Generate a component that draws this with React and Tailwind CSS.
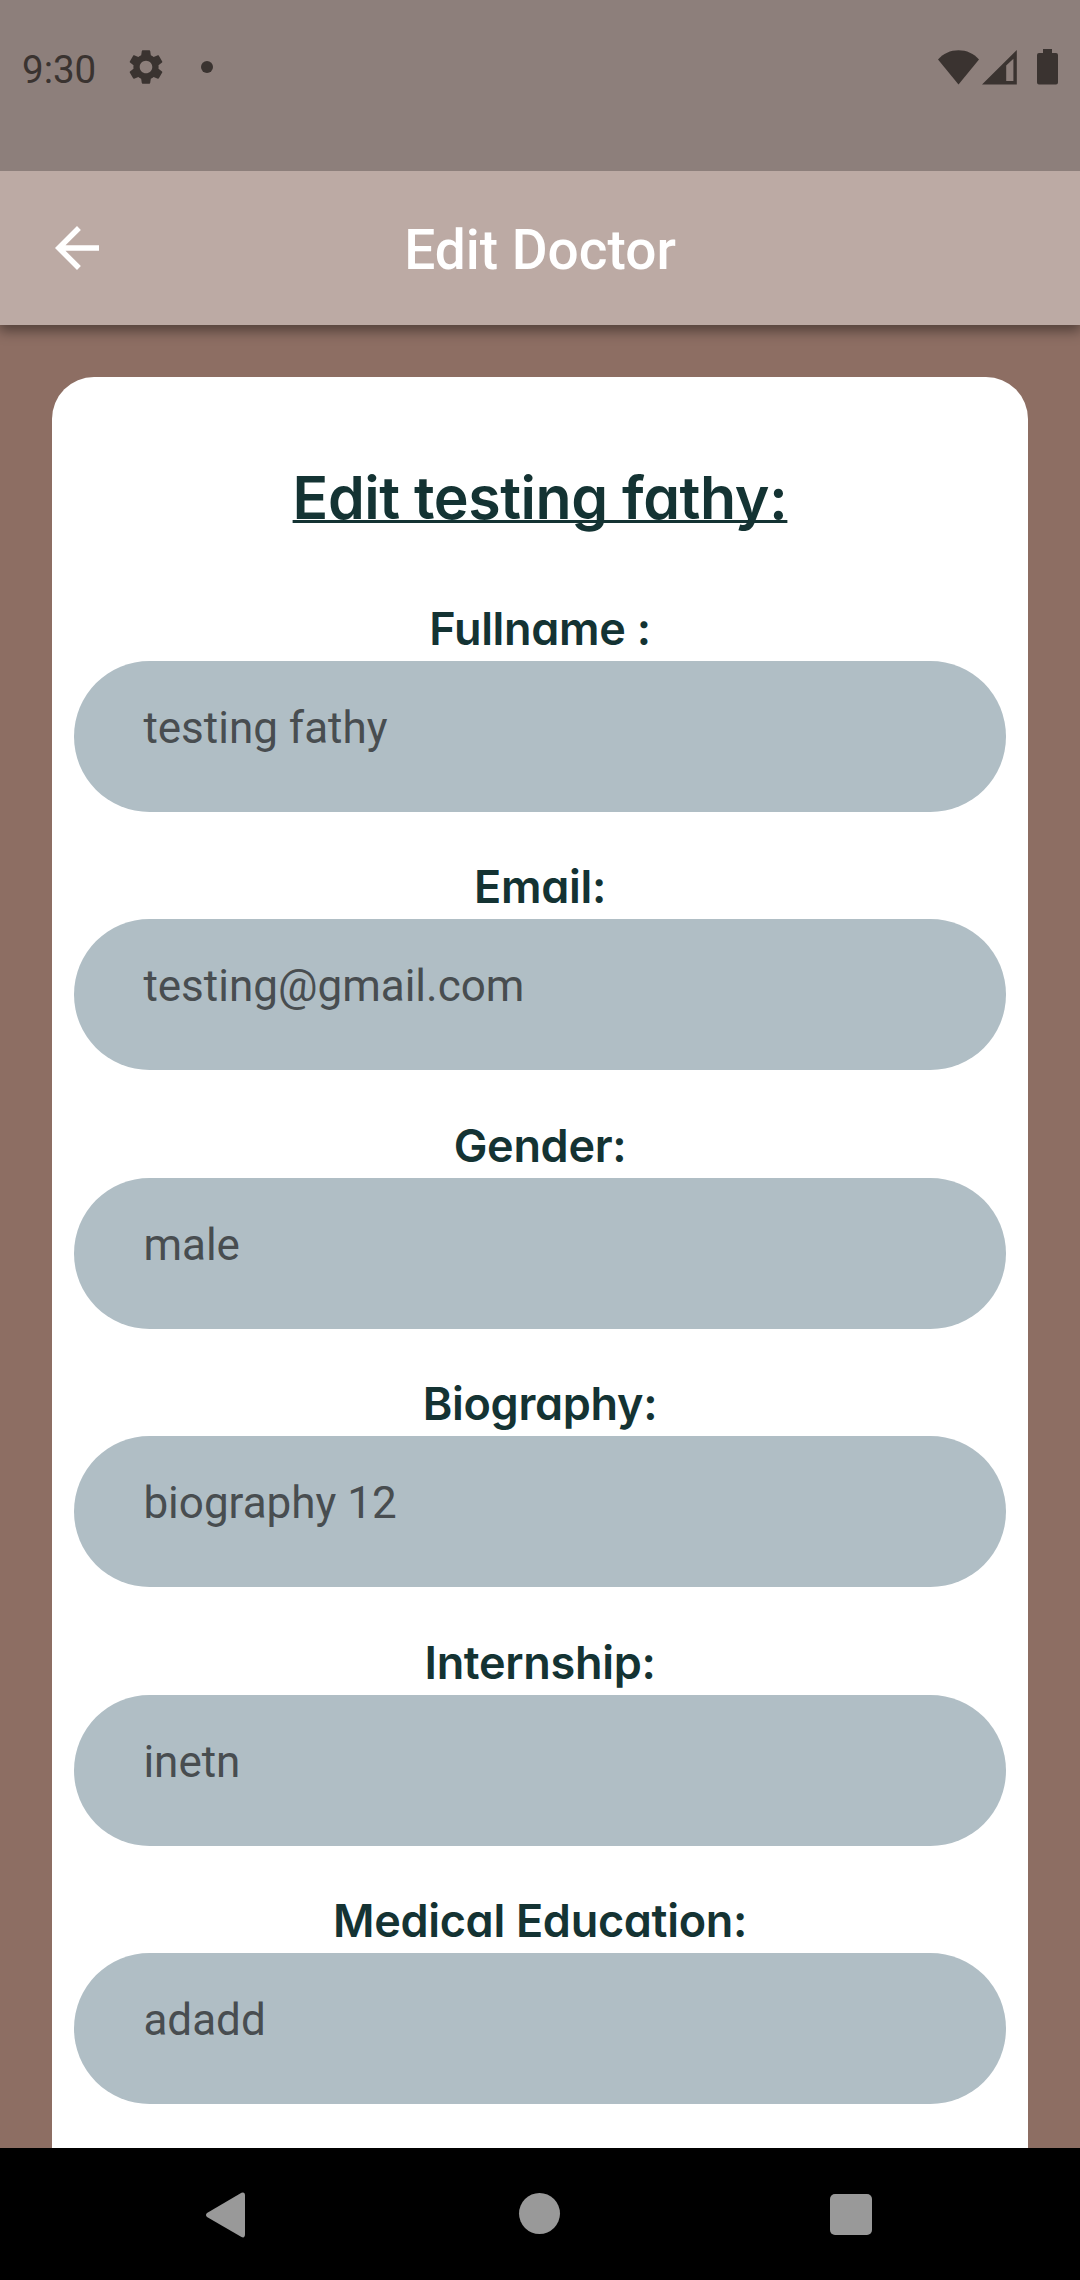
const fields = [
  { label: "Fullname :", value: "testing fathy" },
  { label: "Email:", value: "testing@gmail.com" },
  { label: "Gender:", value: "male" },
  { label: "Biography:", value: "biography 12" },
  { label: "Internship:", value: "inetn" },
  { label: "Medical Education:", value: "adadd" },
];

function StatusBar() {
  return (
    <div className="relative z-20 flex h-[171px] shrink-0 items-start justify-between bg-[#8d7f7b] pt-[46px] pr-[22px] pl-[22px] text-[#3a3330]">
      <div className="flex h-[45px] items-center">
        <span className="mt-[2px] w-[103px] text-[38.5px] leading-[45px]">9:30</span>
        <svg className="-mt-[3px] h-[42px] w-[42px]" viewBox="0 0 24 24" fill="currentColor">
          <path d="M19.14 12.94c.04-.3.06-.61.06-.94 0-.32-.02-.64-.07-.94l2.03-1.58c.18-.14.23-.41.12-.61l-1.92-3.32c-.12-.22-.37-.29-.59-.22l-2.39.96c-.5-.38-1.03-.7-1.62-.94l-.36-2.54c-.04-.24-.24-.41-.48-.41h-3.84c-.24 0-.43.17-.47.41l-.36 2.54c-.59.24-1.13.57-1.62.94l-2.39-.96c-.22-.08-.47 0-.59.22L2.74 8.87c-.12.21-.08.47.12.61l2.03 1.58c-.05.3-.09.63-.09.94s.02.64.07.94l-2.03 1.58c-.18.14-.23.41-.12.61l1.92 3.32c.12.22.37.29.59.22l2.39-.96c.5.38 1.03.7 1.62.94l.36 2.54c.05.24.24.41.48.41h3.84c.24 0 .44-.17.47-.41l.36-2.54c.59-.24 1.13-.56 1.62-.94l2.39.96c.22.08.47 0 .59-.22l1.92-3.32c.12-.22.07-.47-.12-.61l-2.01-1.58zM12 15.6c-1.98 0-3.6-1.62-3.6-3.6s1.62-3.6 3.6-3.6 3.6 1.62 3.6 3.6-1.62 3.6-3.6 3.6z" />
        </svg>
        <span className="-mt-[3px] ml-[34px] h-3 w-3 rounded-full bg-current" />
      </div>
      <div className="flex pt-[3px]">
        <svg className="h-[36px] w-[41px]" viewBox="0 0 41 36" fill="currentColor">
          <path d="M20.5 35.4 0 10.5C5 4.5 12.5 1.2 20.5 1.2S36 4.5 41 10.5z" />
        </svg>
        <svg className="ml-[3px] h-[36px] w-[35px]" viewBox="0 0 35 36" fill="currentColor">
          <path fillRule="evenodd" d="M0 35.6 34.8 1v34.6zM24.2 16.5v15.5h7.2V9.8z" />
        </svg>
        <svg className="ml-[20px] h-[36px] w-[21px]" viewBox="0 0 21 36" fill="currentColor">
          <path d="M6 0h9v4h4a2 2 0 0 1 2 2v27.5a2 2 0 0 1-2 2H2a2 2 0 0 1-2-2V6a2 2 0 0 1 2-2h4z" />
        </svg>
      </div>
    </div>
  );
}

function AppBar() {
  return (
    <header className="z-10 grid h-[154px] shrink-0 grid-cols-[154px_1fr_154px] items-center bg-[#bcaaa4] text-white shadow-[0_5px_12px_1px_rgba(0,0,0,0.42)]">
      <svg className="ml-[44px] h-[66px] w-[66px]" viewBox="0 0 24 24" fill="currentColor">
        <path d="M20 11H7.83l5.59-5.59L12 4l-8 8 8 8 1.41-1.41L7.83 13H20v-2z" />
      </svg>
      <h1 className="mt-[4px] text-center text-[55px] leading-[64px] font-medium">Edit Doctor</h1>
    </header>
  );
}

function Field({ label, value }) {
  return (
    <div className="mb-[45.5px]">
      <div className="pb-[2px] text-center font-[Inter,sans-serif] text-[45px] leading-[60px] font-semibold tracking-[-0.3px] text-[#143333] [font-feature-settings:'cv11','calt'_0]">
        {label}
      </div>
      <div className="h-[151px] rounded-full bg-[#b0bec5] pt-[41px] pl-[69px] text-[44px] leading-[52px] text-[#484d50]">
        {value}
      </div>
    </div>
  );
}

function NavBar() {
  return (
    <nav className="flex h-[132px] shrink-0 justify-between bg-black pt-[44px] pr-[208.5px] pl-[206px] text-[#999]">
      <svg className="h-[46px] w-[40px]" viewBox="0 0 40 46" fill="currentColor">
        <path d="M1 21 35.5.7Q39-.5 39 3.5V42Q39 46.500 35.500 45L1 25Q-1 23 1 21z" />
      </svg>
      <span className="mt-[1px] ml-[3px] h-[41px] w-[41px] rounded-full bg-current" />
      <span className="mt-[1.5px] h-[41.5px] w-[41.5px] rounded-[5px] bg-current" />
    </nav>
  );
}

export default function App() {
  return (
    <div className="flex h-[2280px] w-[1080px] flex-col overflow-hidden bg-[#8d6e63] font-[Roboto,sans-serif]">
      <StatusBar />
      <AppBar />
      <main className="min-h-0 flex-1 overflow-hidden px-[52.4px] pt-[52.4px]">
        <section className="rounded-t-[42px] bg-white px-[22px] pt-[80.6px] pb-10">
          <h2 className="mb-[61px] text-center font-[Inter,sans-serif] text-[59px] leading-[80px] font-semibold tracking-[-0.45px] text-[#143333] underline decoration-[2.75px] underline-offset-[1px] [font-feature-settings:'cv11','calt'_0] [text-decoration-skip-ink:none]">
            Edit testing fathy:
          </h2>
          {fields.map((field) => (
            <Field key={field.label} label={field.label} value={field.value} />
          ))}
        </section>
      </main>
      <NavBar />
    </div>
  );
}
